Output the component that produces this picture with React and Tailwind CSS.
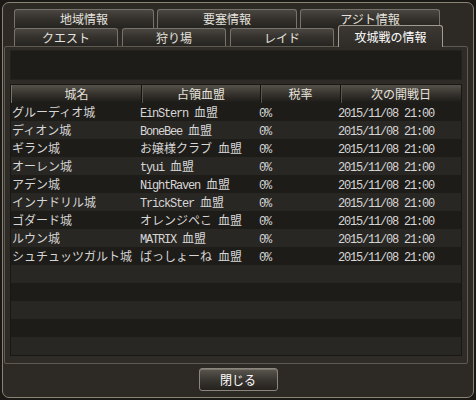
import React from 'react';

const rows = [
    ['グルーディオ城', 'EinStern 血盟'],
    ['ディオン城', 'BoneBee 血盟'],
    ['ギラン城', 'お嬢様クラブ 血盟'],
    ['オーレン城', 'tyui 血盟'],
    ['アデン城', 'NightRaven 血盟'],
    ['インナドリル城', 'TrickSter 血盟'],
    ['ゴダード城', 'オレンジペこ 血盟'],
    ['ルウン城', 'MATRIX 血盟'],
    ['シュチュッツガルト城', 'ばっしょーね 血盟'],
];

// ascii runs get the narrow 6px mono look of the game font
const Mixed = ({ text }) =>
    text
        .split(/([\x20-\x7e]+)/)
        .filter(Boolean)
        .map((s, i) =>
            /^[\x20-\x7e]+$/.test(s) ? (
                <span key={i} className="font-['Liberation_Mono',monospace] tracking-[-1.2px]">
                    {s}
                </span>
            ) : (
                <span key={i}>{s}</span>
            )
        );

const Tab = ({ label, w }) => (
    <div
        className={`${w} h-full rounded-t-[3px] border border-b-0 border-[#77726a] bg-gradient-to-b from-[#4a4742] via-[#34312d] to-[#262420] flex items-center justify-center text-[12px] leading-none text-[#e4e2de]`}
    >
        {label}
    </div>
);

const App = () => {
    const cols = 'grid grid-cols-[129px_119px_80px_121px]';
    return (
        <div className="w-[476px] h-[400px] p-[2px] bg-[#1b1916] font-['Noto_Sans_CJK_JP',sans-serif] overflow-hidden">
            <div className="h-full rounded-[7px] border border-[#8a8272] bg-[#2d2a26] flex flex-col">
                {/* tabs row 1 */}
                <div className="flex gap-[3px] ml-[11px] mt-[6px] h-[19px]">
                    <Tab label="地域情報" w="w-[140px]" />
                    <Tab label="要塞情報" w="w-[140px]" />
                    <Tab label="アジト情報" w="w-[140px]" />
                </div>
                {/* tabs row 2 */}
                <div className="flex items-start gap-[4px] ml-[11px] h-[18px]">
                    <div className="h-[18px] flex"><Tab label="クエスト" w="w-[104px]" /></div>
                    <div className="h-[18px] flex"><Tab label="狩り場" w="w-[104px]" /></div>
                    <div className="h-[18px] flex"><Tab label="レイド" w="w-[104px]" /></div>
                    <div className="relative z-10 -mt-[3px] h-[22px] w-[105px] rounded-t-[3px] border border-b-0 border-[#a29b90] bg-gradient-to-b from-[#3c3934] to-[#2f2c28] flex items-center justify-center text-[12px] leading-none text-white">
                        攻城戦の情報
                    </div>
                </div>

                {/* panel */}
                <div className="ml-[1px] w-[464px] h-[318px] border border-[#5e5951] rounded-[2px] bg-[#2f2c28] px-[5px] pt-[3px] flex flex-col">
                    <div className="h-[30px] bg-[#1e1c19] border border-[#24221f]" />
                    <div className="mt-[4px] border border-[#1a1815] bg-[#1e1c19]">
                        <div className={`${cols} h-[18px] bg-gradient-to-b from-[#55514a] via-[#36332e] to-[#1d1b18] border-l border-[#77726a] text-[12px] leading-[18px] text-[#e6e2dc]`}>
                            <div className="text-center">城名</div>
                            <div className="text-center border-l border-[#15130f] shadow-[inset_1px_0_0_#5a554d]">占領血盟</div>
                            <div className="text-center border-l border-[#15130f] shadow-[inset_1px_0_0_#5a554d]">税率</div>
                            <div className="text-center border-l border-[#15130f] shadow-[inset_1px_0_0_#5a554d]">次の開戦日</div>
                        </div>
                        {Array.from({ length: 14 }).map((_, i) => {
                            const r = rows[i];
                            return (
                                <div
                                    key={i}
                                    className={`${cols} h-[18px] text-[12px] leading-[18px] text-[#d6d6d6] whitespace-pre ${i % 2 === 0 ? 'bg-[#1e1c19]' : 'bg-[#292724]'}`}
                                >
                                    {r && (
                                        <>
                                            <div className="pl-[1px]">{r[0]}</div>
                                            <div><Mixed text={r[1]} /></div>
                                            <div><Mixed text="0%" /></div>
                                            <div className="-ml-[1px]"><Mixed text="2015/11/08 21:00" /></div>
                                        </>
                                    )}
                                </div>
                            );
                        })}
                    </div>
                </div>

                <button className="mx-auto mt-[4px] w-[79px] h-[23px] rounded-[3px] border border-[#8c867c] bg-gradient-to-b from-[#5b5750] via-[#3a3631] to-[#25221e] text-[12px] leading-none text-white shadow-[inset_0_1px_0_#7b766d]">
                    閉じる
                </button>
            </div>
        </div>
    );
};

export default App;
